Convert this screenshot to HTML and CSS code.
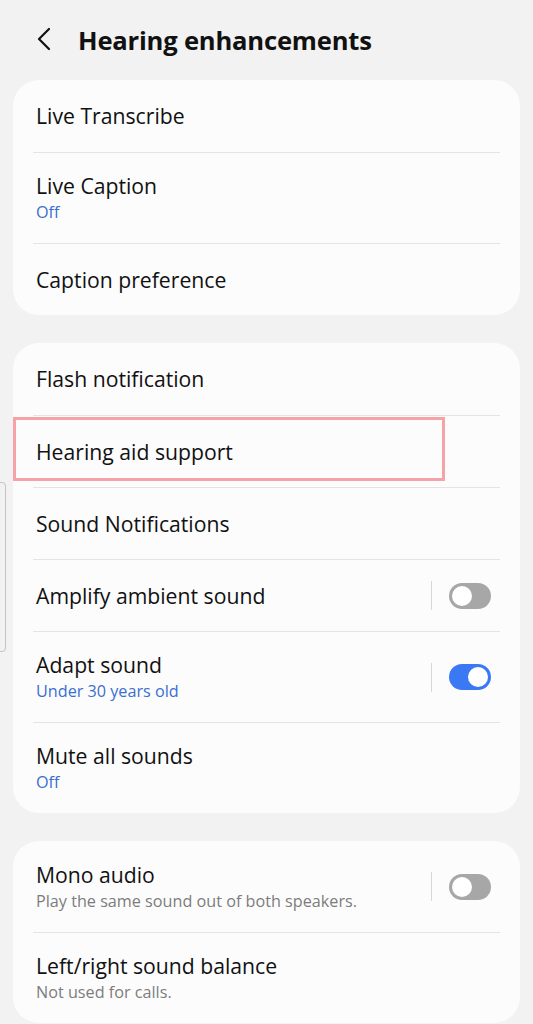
FILE: index.html
```html
<!DOCTYPE html>
<html>
<head>
    <title>Hearing enhancements</title>
    <link rel="stylesheet" href="styles.css">
</head>
<body>
    <div class="edge-tab"></div>

    <header class="topbar">
        <svg class="back" width="16" height="24" viewBox="0 0 16 24"><path d="M13 2 L3 12 L13 22" fill="none" stroke="#111" stroke-width="2.2" stroke-linecap="round" stroke-linejoin="round"/></svg>
        <h1>Hearing enhancements</h1>
    </header>

    <section class="card">
        <div class="row"><div class="label">Live Transcribe</div></div>
        <div class="row tall">
            <div class="label">Live Caption</div>
            <div class="sub blue">Off</div>
        </div>
        <div class="row"><div class="label">Caption preference</div></div>
    </section>

    <section class="card">
        <div class="row"><div class="label">Flash notification</div></div>
        <div class="row marked">
            <div class="label">Hearing aid support</div>
            <div class="mark"></div>
        </div>
        <div class="row"><div class="label">Sound Notifications</div></div>
        <div class="row switch-row">
            <div class="text"><div class="label">Amplify ambient sound</div></div>
            <span class="sep"></span>
            <span class="toggle"></span>
        </div>
        <div class="row tall switch-row">
            <div class="text">
                <div class="label">Adapt sound</div>
                <div class="sub blue">Under 30 years old</div>
            </div>
            <span class="sep"></span>
            <span class="toggle on"></span>
        </div>
        <div class="row tall">
            <div class="label">Mute all sounds</div>
            <div class="sub blue">Off</div>
        </div>
    </section>

    <section class="card">
        <div class="row tall switch-row">
            <div class="text">
                <div class="label">Mono audio</div>
                <div class="sub">Play the same sound out of both speakers.</div>
            </div>
            <span class="sep"></span>
            <span class="toggle"></span>
        </div>
        <div class="row tall">
            <div class="label">Left/right sound balance</div>
            <div class="sub">Not used for calls.</div>
        </div>
    </section>
</body>
</html>
```

FILE: styles.css
```css
body { margin: 0; background: #f2f2f2; font-family: "Open Sans", "Noto Sans", sans-serif; color: #111; overflow: hidden; }

.topbar { display: flex; align-items: center; height: 80px; padding-left: 36px; }
.topbar .back { margin-right: 26px; margin-top: -2px; }
.topbar h1 { margin: 0; font-size: 25.6px; font-weight: 700; letter-spacing: -0.2px; }

.card { background: #fcfcfd; border-radius: 26px; margin: 0 13px 28px 13px; padding: 0 20px; }

.row { position: relative; box-sizing: border-box; display: flex; flex-direction: column; justify-content: center; height: 72px; padding: 0 3px; border-top: 1px solid #e4e4e6; }
.row:first-child { border-top: none; }
.row.tall { height: 91px; }

.label { font-size: 21.2px; line-height: 28px; }
.sub { font-size: 16.2px; line-height: 24px; color: #7c7c7c; }
.sub.blue { color: #3a6fd0; }

.switch-row { flex-direction: row; align-items: center; justify-content: flex-start; }
.switch-row .text { flex: 1; }
.sep { width: 1px; height: 29px; background: #d8d8d8; margin-right: 17px; }
.toggle { position: relative; width: 42px; height: 26px; border-radius: 13px; background: #a7a7a7; margin-right: 6px; }
.toggle::after { content: ""; position: absolute; top: 3px; left: 3px; width: 20px; height: 20px; border-radius: 50%; background: #fff; }
.toggle.on { background: #3b78f3; }
.toggle.on::after { left: 19px; }

.mark { position: absolute; left: -20px; top: 1px; width: 426px; height: 58px; border: 3px solid #f5a3a6; }

.edge-tab { position: absolute; left: -6px; top: 482px; width: 10px; height: 168px; border: 1px solid #c4c4c4; border-radius: 4px; }
```
